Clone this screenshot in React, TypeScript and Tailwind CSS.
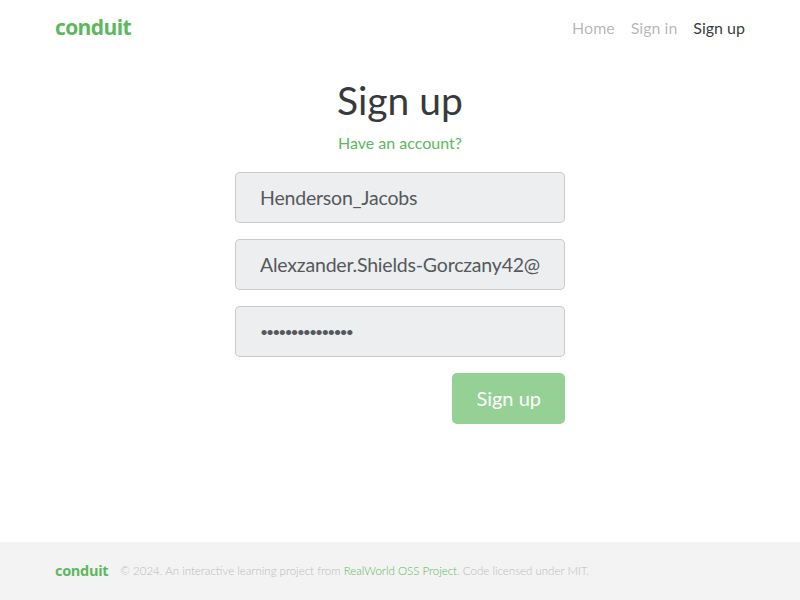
import React from "react";

const font = { fontFamily: "Lato, 'Noto Sans', sans-serif" };
const logoFont = { fontFamily: "'Open Sans', sans-serif" };

const NavBar = () => (
  <nav className="h-[55px]">
    <div className="mx-auto flex h-full w-[690px] items-center justify-between">
      <a className="text-[21px] font-bold tracking-[-0.6px] text-[#5cb85c]" style={logoFont}>
        conduit
      </a>
      <ul className="flex items-center text-[16px]">
        <li className="px-2 text-black/30">Home</li>
        <li className="px-2 text-black/30">Sign in</li>
        <li className="pl-2 text-black/80">Sign up</li>
      </ul>
    </div>
  </nav>
);

const Field = ({ value, type = "text" }: { value: string; type?: string }) => (
  <input
    readOnly
    type={type}
    value={value}
    className={
      type === "password"
        ? "block h-[51px] w-full rounded-[5px] border border-black/15 bg-[#eceeef] px-6 text-[14px] tracking-[-2px] text-[#55595c] outline-none"
        : "block h-[51px] w-full rounded-[5px] border border-black/15 bg-[#eceeef] px-6 text-[19.5px] tracking-[-0.2px] text-[#55595c] outline-none"
    }
    style={font}
  />
);

const SignUp = () => (
  <div className="pt-[24px]">
    <h1 className="text-center text-[39px] leading-[1.1] text-[#373a3c]">Sign up</h1>
    <p className="mt-[9px] text-center text-[16px] text-[#5cb85c]">Have an account?</p>
    <form className="mx-auto mt-[17px] flex w-[330px] flex-col gap-4">
      <Field value="Henderson_Jacobs" />
      <Field value="Alexzander.Shields-Gorczany42@example.com" />
      <Field type="password" value="passwordpasswor" />
      <div className="flex justify-end">
        <button
          type="button"
          className="h-[51px] rounded-[5px] bg-[#5cb85c]/65 px-6 text-[20px] text-white"
          style={font}
        >
          Sign up
        </button>
      </div>
    </form>
  </div>
);

const Footer = () => (
  <footer className="mt-auto h-[58px] bg-[#f3f3f3]">
    <div className="mx-auto flex h-full w-[690px] items-center">
      <span className="text-[14.5px] font-bold tracking-[-0.3px] text-[#5cb85c]" style={logoFont}>
        conduit
      </span>
      <span className="ml-[12px] text-[11.5px] font-light text-[#bbb]">
        © 2024. An interactive learning project from{" "}
        <a className="text-[#5cb85c]">RealWorld OSS Project</a>. Code licensed under MIT.
      </span>
    </div>
  </footer>
);

export default function App() {
  return (
    <div className="flex min-h-screen flex-col bg-white" style={font}>
      <NavBar />
      <SignUp />
      <Footer />
    </div>
  );
}
